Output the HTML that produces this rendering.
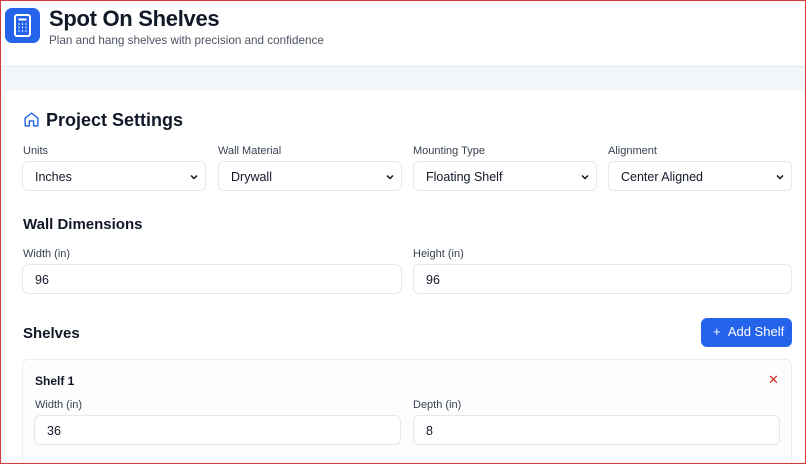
<!DOCTYPE html><html><head><style>
*{box-sizing:border-box;margin:0;padding:0}
html,body{width:806px;height:464px;overflow:hidden}
body{font-family:"Liberation Sans",sans-serif;background:#f3f6fb;position:relative;color:#111827}
.frame{position:absolute;left:0;top:0;width:806px;height:464px;border:1px solid #d23b3b;pointer-events:none;z-index:9}
.hdr{position:absolute;left:0;top:0;width:806px;height:67px;background:#fff;border-bottom:1px solid #e5e7eb}
.ic{position:absolute;left:5px;top:8px;width:35px;height:35px;border-radius:7px;background:#2563eb}
h1{position:absolute;left:49px;top:6px;font-size:22px;font-weight:700;color:#111827;letter-spacing:-0.3px}
.sub{position:absolute;left:49px;top:34px;font-size:11.7px;color:#4b5563}
.card{position:absolute;left:5px;top:90px;width:801px;height:374px;background:#fff;border-radius:8px}
.a{position:absolute}
.t{font-weight:700;font-size:18px}
.l{font-size:11px;color:#374151}
.s{position:absolute;height:30px;border:1px solid #e5e7eb;border-radius:6px;background:#fff;font-size:12.5px;padding:8px 0 0 12px;color:#111827}
.s svg{position:absolute;right:6px;top:10px}
.h2{font-size:15px;font-weight:600}
.btn{position:absolute;left:701px;top:318px;width:91px;height:29px;background:#2563eb;border-radius:6px;color:#fff;font-size:13px;padding:6px 0 0 12px}
.sc{position:absolute;left:22px;top:359px;width:770px;height:120px;border:1px solid #eceef1;border-radius:6px;background:#fdfdfd}
</style></head><body>
<div class="hdr">
<div class="ic"><svg width="35" height="35" viewBox="0 0 35 35" fill="none" stroke="#fff" stroke-width="2"><rect x="10" y="7" width="15" height="21" rx="2"/><line x1="13.5" y1="11.5" x2="21.5" y2="11.5"/><g stroke-width="1.8"><line x1="13.5" y1="16" x2="14.5" y2="16"/><line x1="17" y1="16" x2="18" y2="16"/><line x1="20.5" y1="16" x2="21.5" y2="16"/><line x1="13.5" y1="19.5" x2="14.5" y2="19.5"/><line x1="17" y1="19.5" x2="18" y2="19.5"/><line x1="20.5" y1="19.5" x2="21.5" y2="19.5"/><line x1="13.5" y1="23" x2="14.5" y2="23"/><line x1="17" y1="23" x2="18" y2="23"/><line x1="20.5" y1="23" x2="21.5" y2="23"/></g></svg></div>
<h1>Spot On Shelves</h1>
<div class="sub">Plan and hang shelves with precision and confidence</div>
</div>
<div class="card"></div>
<svg class="a" style="left:23px;top:111px" width="17" height="17" viewBox="0 0 24 24" fill="none" stroke="#2563eb" stroke-width="2" stroke-linejoin="round"><path d="M3 10l9-7 9 7v10a1 1 0 0 1-1 1h-5v-7h-6v7H4a1 1 0 0 1-1-1z"/></svg>
<div class="a t" style="left:46px;top:110px">Project Settings</div>
<div class="a l" style="left:23px;top:145px">Units</div>
<div class="a l" style="left:218px;top:145px">Wall Material</div>
<div class="a l" style="left:413px;top:145px">Mounting Type</div>
<div class="a l" style="left:608px;top:145px">Alignment</div>
<div class="s" style="left:22px;top:161px;width:184px">Inches<svg width="10" height="10" viewBox="0 0 10 10"><path d="M2 3.5l3 3 3-3" fill="none" stroke="#111" stroke-width="1.5"/></svg></div>
<div class="s" style="left:218px;top:161px;width:184px">Drywall<svg width="10" height="10" viewBox="0 0 10 10"><path d="M2 3.5l3 3 3-3" fill="none" stroke="#111" stroke-width="1.5"/></svg></div>
<div class="s" style="left:413px;top:161px;width:184px">Floating Shelf<svg width="10" height="10" viewBox="0 0 10 10"><path d="M2 3.5l3 3 3-3" fill="none" stroke="#111" stroke-width="1.5"/></svg></div>
<div class="s" style="left:608px;top:161px;width:184px">Center Aligned<svg width="10" height="10" viewBox="0 0 10 10"><path d="M2 3.5l3 3 3-3" fill="none" stroke="#111" stroke-width="1.5"/></svg></div>
<div class="a h2" style="left:23px;top:216px">Wall Dimensions</div>
<div class="a l" style="left:23px;top:248px">Width (in)</div>
<div class="a l" style="left:413px;top:248px">Height (in)</div>
<div class="s" style="left:22px;top:264px;width:380px">96</div>
<div class="s" style="left:413px;top:264px;width:379px">96</div>
<div class="a h2" style="left:23px;top:325px">Shelves</div>
<div class="btn">+&nbsp;&nbsp;Add Shelf</div>
<div class="sc"></div>
<div class="a" style="left:35px;top:374px;font-size:12px;font-weight:600">Shelf 1</div>
<div class="a" style="left:768px;top:372px;color:#dc2626;font-size:13px">✕</div>
<div class="a l" style="left:35px;top:399px">Width (in)</div>
<div class="a l" style="left:413px;top:399px">Depth (in)</div>
<div class="s" style="left:34px;top:415px;width:367px">36</div>
<div class="s" style="left:413px;top:415px;width:367px">8</div>
<div class="frame"></div>
</body></html>
